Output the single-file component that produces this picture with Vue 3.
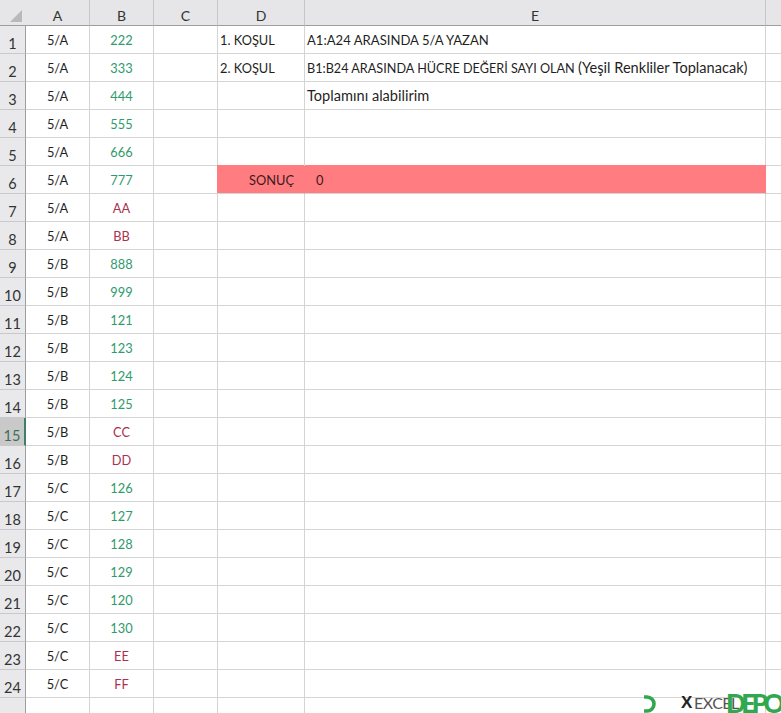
<script setup>
const a = [...Array(8).fill('5/A'), ...Array(8).fill('5/B'), ...Array(8).fill('5/C')]
const b = ['222','333','444','555','666','777','AA','BB','888','999','121','123','124','125','CC','DD','126','127','128','129','120','130','EE','FF']
const texts = {
  1: { d: '1. KOŞUL', caps: 'A1:A24 ARASINDA 5/A YAZAN', low: '' },
  2: { d: '2. KOŞUL', caps: 'B1:B24 ARASINDA HÜCRE DEĞERİ SAYI OLAN ', low: '(Yeşil Renkliler Toplanacak)' },
  3: { d: '', caps: '', low: 'Toplamını alabilirim' }
}
const rows = a.map((v, i) => ({
  n: i + 1,
  a: v,
  b: b[i],
  red: /[A-Z]/.test(b[i]),
  d: texts[i + 1]?.d ?? '',
  caps: texts[i + 1]?.caps ?? '',
  low: texts[i + 1]?.low ?? ''
}))
</script>

<template>
  <div class="sheet">
    <div class="row head">
      <div class="rh corner"><span class="tri"></span></div>
      <div class="ch w-a">A</div>
      <div class="ch w-a">B</div>
      <div class="ch w-a">C</div>
      <div class="ch w-d">D</div>
      <div class="ch w-e">E</div>
      <div class="ch w-f"></div>
    </div>
    <div v-for="r in rows" :key="r.n" class="row body">
      <div class="rh" :class="{ sel: r.n === 15 }"><span>{{ r.n }}</span></div>
      <div class="c w-a mid">{{ r.a }}</div>
      <div class="c w-a mid" :class="r.red ? 'red' : 'green'">{{ r.b }}</div>
      <div class="c w-a"></div>
      <div class="c w-d" :class="{ 'pink-d': r.n === 6 }">{{ r.n === 6 ? 'SONUÇ' : r.d }}</div>
      <div class="c w-e" :class="{ 'pink-e': r.n === 6 }">
        <template v-if="r.n === 6">0</template>
        <span v-else class="txt"><span class="caps" :class="{ wide: r.n === 1 }">{{ r.caps }}</span><span class="low">{{ r.low }}</span></span>
      </div>
      <div class="c w-f"></div>
    </div>
    <div class="row body">
      <div class="rh"></div>
      <div class="c w-a"></div>
      <div class="c w-a"></div>
      <div class="c w-a"></div>
      <div class="c w-d"></div>
      <div class="c w-e"></div>
      <div class="c w-f"></div>
    </div>
    <div class="logo">
      <svg class="arc" width="14" height="18" viewBox="0 0 14 18">
        <path d="M1 2 H4 A7 7 0 0 1 4 16 H1" fill="none" stroke="#2fa84f" stroke-width="3.6" />
      </svg>
      <span class="x">X</span><span class="excel">EXCEL</span><span class="depo">DEPO</span>
    </div>
  </div>
</template>

<style>
html, body { margin: 0; background: #fff; }
</style>

<style scoped>
.sheet {
  position: relative;
  width: 781px;
  height: 713px;
  overflow: hidden;
  background: #fff;
  font-family: Lato, "Liberation Sans", sans-serif;
  font-size: 12.8px;
  color: #1f1f1f;
}
.row { display: flex; }
.head { height: 26px; background: #e6e6e8; }
.body { height: 28px; }
.rh {
  box-sizing: border-box;
  flex: 0 0 26px;
  background: #e9e9eb;
  border-bottom: 1px solid #c9c9cb;
  border-right: 1px solid #9d9d9f;
  font-size: 14.5px;
  color: #333;
  display: flex;
  align-items: flex-end;
  justify-content: center;
  padding-bottom: 1px;
}
.rh.sel { background: #c9c9c9; border-right: 2px solid #3f7f63; color: #3f6f58; }
.corner {
  position: relative;
  border-bottom: 1px solid #9d9d9f;
  border-right: 0;
  background: #e6e6e8;
}
.tri {
  position: absolute;
  left: 10px;
  top: 10px;
  width: 0;
  height: 0;
  border-left: 12px solid transparent;
  border-bottom: 12px solid #b9b9bb;
}
.ch {
  box-sizing: border-box;
  display: flex;
  align-items: center;
  justify-content: center;
  border-bottom: 1px solid #9d9d9f;
  border-right: 1px solid #c6c6c8;
  font-size: 14px;
  color: #333;
  padding-top: 6px;
}
.c {
  box-sizing: border-box;
  display: flex;
  align-items: center;
  white-space: pre;
  border-right: 1px solid #d4d4d4;
  border-bottom: 1px solid #d4d4d4;
  padding: 1px 2px 0 2px;
}
.w-a { flex: 0 0 64px; }
.w-d { flex: 0 0 87px; }
.w-e { flex: 0 0 461px; }
.w-f { flex: 0 0 16px; border-right: 0; }
.mid { justify-content: center; }
.green { color: #2f9a6c; }
.red { color: #a8324f; }
.txt { margin-bottom: 2px; }
.caps { font-size: 12.65px; }
.caps.wide { font-size: 13.1px; }
.low { font-size: 14.6px; }
.pink-d, .pink-e { background: #ff7c80; border-right-color: #ff7c80; color: #3a1a1c; }
.pink-d { justify-content: flex-end; padding-right: 10px; box-shadow: -1px -1px 0 #ff7c80; }
.pink-e { padding-left: 11px; box-shadow: 0 -1px 0 #ff7c80; }
.logo {
  position: absolute;
  left: 643px;
  top: 692px;
  width: 138px;
  height: 21px;
}
.arc { position: absolute; left: 0; top: 3px; }
.x { position: absolute; left: 38px; top: 2px; font: 700 17px/18px "Liberation Sans", sans-serif; color: #222; }
.excel { position: absolute; left: 51px; top: 2px; font: 400 16px/18px Lato, sans-serif; color: #555; letter-spacing: -0.5px; }
.depo { position: absolute; left: 83px; top: 0; font: 900 26px/22px Lato, sans-serif; color: #2fa84f; letter-spacing: -4.5px; }
</style>
